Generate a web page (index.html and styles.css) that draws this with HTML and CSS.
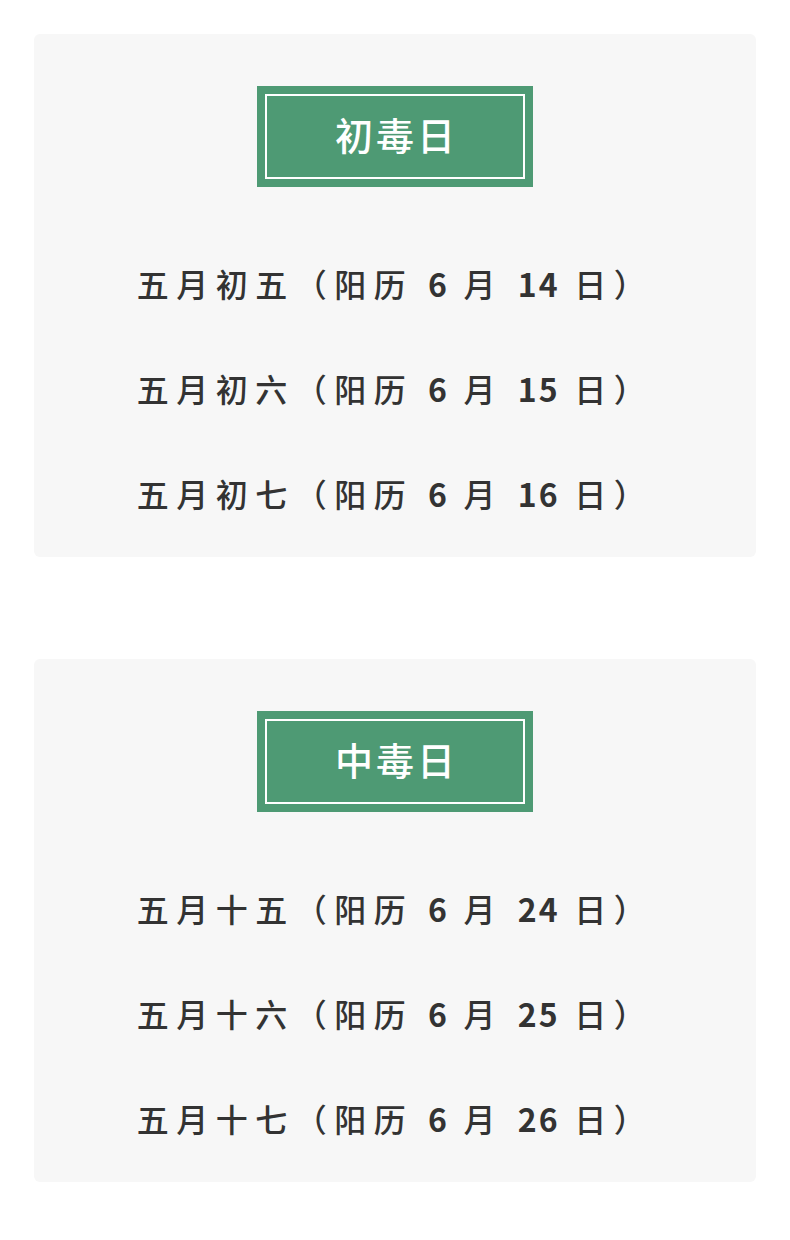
FILE: index.html
```html
<!DOCTYPE html>
<html lang="zh">
<head>
<meta charset="utf-8">
<link rel="stylesheet" href="styles.css">
</head>
<body>
<div class="page">
  <section class="card">
    <div class="tag"><div class="tag-inner">初毒日</div></div>
    <ul class="rows">
      <li class="row">五月初五（阳历 <b>6</b> 月 <b>14</b> 日）</li>
      <li class="row">五月初六（阳历 <b>6</b> 月 <b>15</b> 日）</li>
      <li class="row">五月初七（阳历 <b>6</b> 月 <b>16</b> 日）</li>
    </ul>
  </section>
  <section class="card">
    <div class="tag"><div class="tag-inner">中毒日</div></div>
    <ul class="rows">
      <li class="row">五月十五（阳历 <b>6</b> 月 <b>24</b> 日）</li>
      <li class="row">五月十六（阳历 <b>6</b> 月 <b>25</b> 日）</li>
      <li class="row">五月十七（阳历 <b>6</b> 月 <b>26</b> 日）</li>
    </ul>
  </section>
</div>
</body>
</html>
```
FILE: styles.css
```css
html, body {
  margin: 0;
  padding: 0;
  background: #ffffff;
}
body {
  font-family: "Noto Sans CJK SC", "Noto Sans", sans-serif;
}
.page {
  display: flex;
  flex-direction: column;
  gap: 102px;
  padding: 34px 34px 0 34px;
}
.card {
  width: 722px;
  height: 523px;
  box-sizing: border-box;
  background: #f7f7f7;
  border-radius: 6px;
  padding: 52px 0 0 0;
  display: flex;
  flex-direction: column;
  align-items: center;
}
.tag {
  width: 276px;
  height: 101px;
  box-sizing: border-box;
  background: #4e9a74;
  padding: 8px;
}
.tag-inner {
  height: 100%;
  box-sizing: border-box;
  border: 2px solid #ffffff;
  display: flex;
  align-items: center;
  justify-content: center;
  color: #ffffff;
  font-size: 38px;
  font-weight: 500;
  letter-spacing: 3px;
  padding: 0 0 6px 3px;
}
.rows {
  list-style: none;
  margin: 43px 0 0 0;
  padding: 0;
  display: flex;
  flex-direction: column;
}
.row {
  height: 105px;
  display: flex;
  align-items: center;
  justify-content: center;
  white-space: pre;
  font-size: 32px;
  font-weight: 500;
  letter-spacing: 7.5px;
  color: #333333;
}
.row b {
  font-weight: 700;
  letter-spacing: 2px;
}
```
